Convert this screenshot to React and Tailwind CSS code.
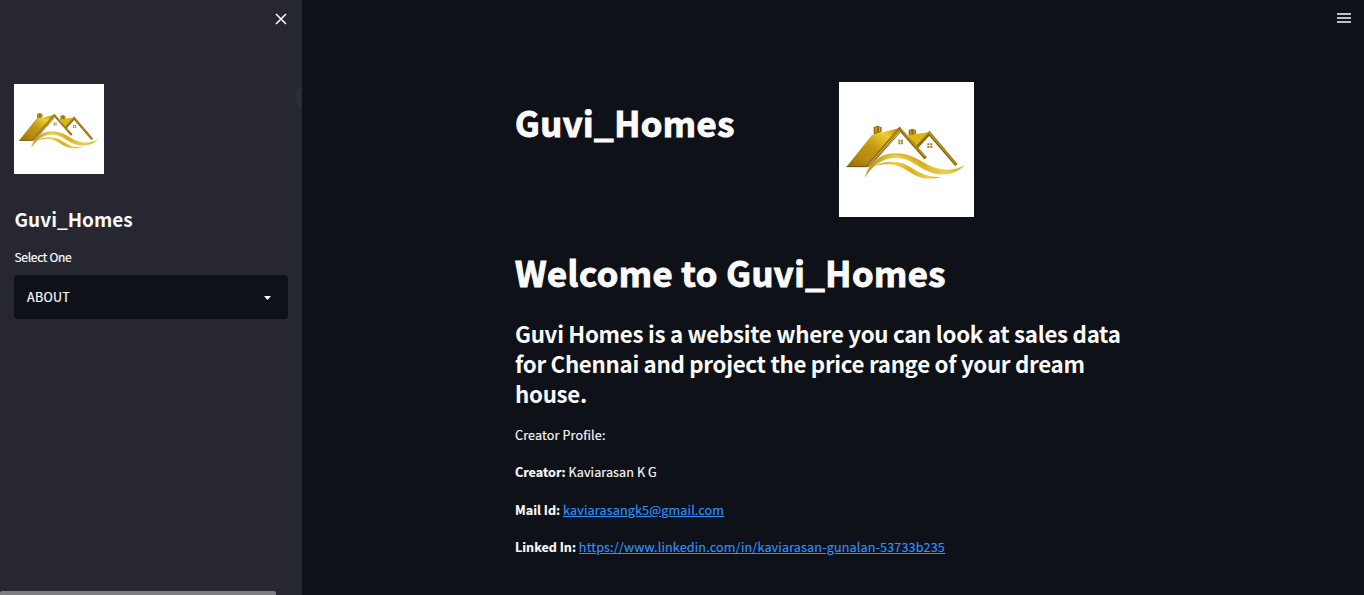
import React from "react";

function HomesLogo({ id, className }) {
  const roof = `${id}-roof`;
  const wave = `${id}-wave`;
  return (
    <svg viewBox="27 24 405 405" className={className} role="img" aria-label="Guvi Homes">
      <defs>
        <linearGradient id={roof} x1="0" y1="1" x2="1" y2="0">
          <stop offset="0" stopColor="#8f6808" />
          <stop offset="0.28" stopColor="#b98c10" />
          <stop offset="0.5" stopColor="#c39812" />
          <stop offset="0.78" stopColor="#efce28" />
          <stop offset="1" stopColor="#b88c0c" />
        </linearGradient>
        <linearGradient id={wave} x1="0" y1="0" x2="1" y2="0">
          <stop offset="0" stopColor="#b08a20" />
          <stop offset="0.3" stopColor="#ecd04a" />
          <stop offset="0.55" stopColor="#dbb021" />
          <stop offset="0.8" stopColor="#ead04e" />
          <stop offset="1" stopColor="#c9a52c" />
        </linearGradient>
      </defs>
      <rect x="27" y="24" width="405" height="405" fill="#fff" />
      <path d="M131 159 L143 155 L155 160 V174 L131 182 Z" fill="#96700c" />
      <path d="M138 160 V176 M149 160 V172" stroke="#e0bd30" strokeWidth="3" />
      <path d="M236 168 L247 164 L258 169 V181 L236 187 Z" fill="#96700c" />
      <path d="M242 169 V182 M253 169 V180" stroke="#d9b52a" strokeWidth="2.5" />
      <path d="M126 183 L208 162 L111 279 H49 Z" fill={`url(#${roof})`} />
      <path d="M50 278 H111" stroke="#71520a" strokeWidth="3" />
      <path d="M234 184 L299 174 L260 220 Z" fill="#dcb41a" />
      <path d="M112 277 L209 165 L287 253" fill="none" stroke="#94700f" strokeWidth="10" />
      <path d="M115 275 L208 168" fill="none" stroke="#f1dc8c" strokeWidth="2" />
      <path d="M120 276 L211 174" fill="none" stroke="#8a6410" strokeWidth="3" />
      <path d="M258 222 L298 178 L379 273" fill="none" stroke="#8d6a0f" strokeWidth="10" />
      <path d="M256 216 L297 175 L377 269" fill="none" stroke="#ddbb35" strokeWidth="2.5" />
      <path d="M211 164 L284 247" stroke="#d4ae2c" strokeWidth="2.5" />
      <g fill="#a67c2e">
        <path d="M205 197h6v6h-6zM213 197h6v6h-6zM205 205h6v6h-6zM213 205h6v6h-6z" />
        <path d="M292 208h6v6h-6zM301 208h6v6h-6zM292 216h6v6h-6zM301 216h6v6h-6z" />
      </g>
      <path
        d="M106 309 C117 268 150 238 196 238 C244 238 266 258 292 271 C325 288 365 295 405 273 C378 304 333 308 298 294 C260 279 240 252 197 252 C155 252 126 279 106 309 Z"
        fill={`url(#${wave})`}
        stroke="#fff"
        strokeWidth="1"
      />
      <path
        d="M106 309 C117 268 150 239 196 240 C240 241 263 260 290 275"
        fill="none"
        stroke="#c39a1e"
        strokeWidth="2"
      />
      <path
        d="M131 277 C158 262 199 257 230 273 C263 291 287 313 337 308 C309 317 277 316 252 302 C222 285 203 267 164 271 C152 272 142 274 131 277 Z"
        fill={`url(#${wave})`}
      />
    </svg>
  );
}

function Sidebar() {
  return (
    <aside className="relative flex h-full w-[302px] shrink-0 flex-col overflow-hidden bg-[#262730] px-3.5">
      <div className="flex h-[38px] justify-end pt-[13px]">
        <svg viewBox="0 0 12 12" className="mr-[1px] h-3 w-3" aria-label="Close">
          <path d="M1 1 L11 11 M11 1 L1 11" stroke="#fafafa" strokeWidth="1.6" fill="none" />
        </svg>
      </div>
      <HomesLogo id="side" className="mt-[46px] h-[90px] w-[90px]" />
      <h2 className="mt-[33px] pl-[0.5px] text-[19px] leading-6 font-semibold whitespace-nowrap">Guvi_Homes</h2>
      <label className="mt-4 pl-[0.5px] text-[12px] leading-5 tracking-[-0.3px] [-webkit-text-stroke:0.2px_#fafafa]">
        Select One
      </label>
      <button className="mt-2 flex h-11 items-center justify-between rounded-[4px] bg-[#0e1117] pr-[17px] pl-[13px] text-[12.5px] tracking-[0.3px] [-webkit-text-stroke:0.2px_#fafafa]">
        <span>ABOUT</span>
        <svg viewBox="0 0 7 4" className="mt-px h-1 w-[7px]">
          <path d="M0 0 H7 L3.5 4 Z" fill="#fafafa" />
        </svg>
      </button>
      <div className="absolute top-[82px] left-[295px] h-[30px] w-[30px] rounded-full bg-[#2c2d36]" />
      <div className="absolute bottom-0 left-0 h-1 w-[276px] rounded-t-[2px] bg-[#7d7c80]" />
    </aside>
  );
}

export default function App() {
  return (
    <div className="flex h-[595px] w-[1364px] overflow-hidden bg-[#0e1117] font-['Noto_Sans_CJK_SC',sans-serif] text-[#fafafa]">
      <Sidebar />
      <main className="relative flex-1 pl-[213px]">
        <svg viewBox="0 0 14 12" className="absolute top-[12px] right-[13px] h-3 w-3.5" aria-label="Menu">
          <path d="M0 2 H14 M0 6 H14 M0 10 H14" stroke="#fafafa" strokeWidth="1.6" />
        </svg>
        <div className="flex h-[217px] pt-[82px]">
          <h1 className="w-[324px] pt-[15px] text-[34.5px] leading-[50px] font-bold tracking-[0.5px] whitespace-nowrap [-webkit-text-stroke:1.1px_#fafafa]">
            <span>Guvi_Homes</span>
          </h1>
          <HomesLogo id="main" className="h-[135px] w-[135px]" />
        </div>
        <h1 className="mt-[30px] text-[34.5px] leading-[50px] font-bold tracking-[0.5px] whitespace-nowrap [-webkit-text-stroke:1.1px_#fafafa]">
          <span>Welcome to Guvi_Homes</span>
        </h1>
        <h3 className="mt-[21px] text-[22.3px] leading-[30px] font-semibold tracking-[-0.3px] whitespace-nowrap">
          Guvi Homes is a website where you can look at sales data
          <br />
          for Chennai and project the price range of your dream
          <br />
          house.
        </h3>
        <div className="mt-[15px] flex flex-col gap-[13.4px] text-[12.6px] leading-6 tracking-[0.14px] whitespace-nowrap [-webkit-text-stroke:0.15px_currentColor]">
          <p>Creator Profile:</p>
          <p>
            <strong className="font-semibold tracking-normal">Creator:</strong>
            <span className="tracking-[0.08px]"> Kaviarasan K G</span>
          </p>
          <p>
            <strong className="font-semibold tracking-normal">Mail Id:</strong>
            <span className="tracking-normal"> </span>
            <a className="text-[#2e93ff] underline">kaviarasangk5@gmail.com</a>
          </p>
          <p>
            <strong className="font-semibold tracking-normal">Linked In:</strong>
            <span className="tracking-normal"> </span>
            <a className="text-[#2e93ff] underline">https://www.linkedin.com/in/kaviarasan-gunalan-53733b235</a>
          </p>
        </div>
      </main>
    </div>
  );
}
